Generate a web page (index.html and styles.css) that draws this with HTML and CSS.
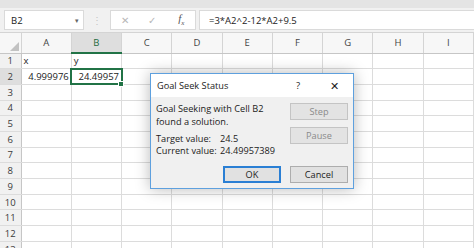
FILE: index.html
```html
<!DOCTYPE html>
<html lang="en-US">
  <head>
    <meta charset="UTF-8" />
    <title>Goal Seek Status</title>
    <link rel="stylesheet" href="styles.css">
  </head>
  <body>
    <div id="ribbon-edge"></div>
    <div id="formula-row">
      <div class="name-box">
        <span>B2</span>
        <span class="drop">&#9662;</span>
      </div>
      <div class="grip">&#8942;</div>
      <div class="fx-buttons">
        <span class="fx-cancel">&#10005;</span>
        <span class="fx-enter">&#10003;</span>
        <span class="fx-label">f<sub>x</sub></span>
      </div>
      <div class="formula-box">=3*A2^2-12*A2+9.5</div>
    </div>

    <table id="sheet">
      <colgroup>
        <col class="head-col">
        <col span="9">
      </colgroup>
      <thead>
        <tr>
          <th class="corner"><div class="corner-tri"></div></th>
          <th>A</th><th class="active">B</th><th>C</th><th>D</th><th>E</th><th>F</th><th>G</th><th>H</th><th>I</th>
        </tr>
      </thead>
      <tbody>
        <tr><th>1</th><td>x</td><td>y</td><td></td><td></td><td></td><td></td><td></td><td></td><td></td></tr>
        <tr><th class="active-row">2</th><td class="num">4.999976</td><td class="num selected">24.49957<div class="handle"></div></td><td></td><td></td><td></td><td></td><td></td><td></td><td></td></tr>
        <tr><th>3</th><td></td><td></td><td></td><td></td><td></td><td></td><td></td><td></td><td></td></tr>
        <tr><th>4</th><td></td><td></td><td></td><td></td><td></td><td></td><td></td><td></td><td></td></tr>
        <tr><th>5</th><td></td><td></td><td></td><td></td><td></td><td></td><td></td><td></td><td></td></tr>
        <tr><th>6</th><td></td><td></td><td></td><td></td><td></td><td></td><td></td><td></td><td></td></tr>
        <tr><th>7</th><td></td><td></td><td></td><td></td><td></td><td></td><td></td><td></td><td></td></tr>
        <tr><th>8</th><td></td><td></td><td></td><td></td><td></td><td></td><td></td><td></td><td></td></tr>
        <tr><th>9</th><td></td><td></td><td></td><td></td><td></td><td></td><td></td><td></td><td></td></tr>
        <tr><th>10</th><td></td><td></td><td></td><td></td><td></td><td></td><td></td><td></td><td></td></tr>
        <tr><th>11</th><td></td><td></td><td></td><td></td><td></td><td></td><td></td><td></td><td></td></tr>
        <tr><th>12</th><td></td><td></td><td></td><td></td><td></td><td></td><td></td><td></td><td></td></tr>
        <tr><th>13</th><td></td><td></td><td></td><td></td><td></td><td></td><td></td><td></td><td></td></tr>
      </tbody>
    </table>

    <!-- Goal Seek dialog floats over the grid -->
    <div id="goal-seek">
      <div class="title-bar">
        <span class="title">Goal Seek Status</span>
        <span class="help">?</span>
        <span class="close">&#10005;</span>
      </div>
      <div class="dialog-body">
        <div class="dialog-main">
          <div class="status-text">
            <p>Goal Seeking with Cell B2<br>found a solution.</p>
            <div class="value-row"><span class="value-label">Target value:</span><span>24.5</span></div>
            <div class="value-row"><span class="value-label">Current value:</span><span>24.49957389</span></div>
          </div>
          <div class="side-buttons">
            <button disabled>Step</button>
            <button disabled>Pause</button>
          </div>
        </div>
        <div class="dialog-footer">
          <button class="default">OK</button>
          <button>Cancel</button>
        </div>
      </div>
    </div>
  </body>
</html>
```

FILE: styles.css
```css
body {
  margin: 0;
  width: 474px;
  height: 248px;
  overflow: hidden;
  position: relative;
  background-color: #fff;
  font-family: "Open Sans", "Liberation Sans", sans-serif;
  color: #222;
}

#ribbon-edge {
  height: 8px;
  background-color: #e4e4e4;
}

#formula-row {
  display: flex;
  align-items: center;
  height: 24px;
  padding-left: 4px;
  background-color: #f1f1f1;
}

.name-box,
.fx-buttons,
.formula-box {
  height: 20px;
  box-sizing: border-box;
  background-color: #fff;
  border: 1px solid #dadada;
  display: flex;
  align-items: center;
  font-size: 9.5px;
}

.name-box {
  width: 80px;
  padding: 0 4px 0 6px;
  justify-content: space-between;
}

.name-box .drop {
  color: #666;
  font-size: 7px;
}

.grip {
  width: 26px;
  text-align: center;
  color: #c4c4c4;
  font-size: 10px;
}

.fx-buttons {
  width: 86px;
  color: #b7b7b7;
}

.fx-buttons span {
  width: 28px;
  text-align: center;
}

.fx-buttons .fx-cancel,
.fx-buttons .fx-enter {
  font-size: 10px;
}

.fx-label {
  margin-left: 2px;
  color: #555;
  font-family: "Liberation Serif", serif;
  font-style: italic;
  font-size: 11px;
}

.fx-label sub {
  font-size: 7px;
}

.formula-box {
  flex: 1;
  margin-left: 3px;
  padding-left: 9px;
  border-right: none;
}

/* Worksheet grid */
#sheet {
  width: 474px;
  table-layout: fixed;
  border-collapse: collapse;
  font-size: 9.5px;
}

#sheet .head-col {
  width: 21px;
}

#sheet thead th {
  height: 19px;
  padding: 0;
  font-weight: normal;
  color: #444;
  background-color: #f7f7f7;
  border-top: 1px solid #d4d4d4;
  border-right: 1px solid #d4d4d4;
  border-bottom: 1px solid #c6c6c6;
}

#sheet thead th.active {
  background-color: #dedede;
  color: #1e6b3f;
  border-bottom: 2px solid #217346;
}

#sheet thead th.corner {
  position: relative;
}

.corner-tri {
  position: absolute;
  right: 2px;
  bottom: 2px;
  width: 0;
  height: 0;
  border-left: 9px solid transparent;
  border-bottom: 9px solid #c2c2c2;
}

#sheet tbody tr {
  height: 15.7px;
}

#sheet tbody th {
  padding: 0;
  font-weight: normal;
  color: #3a3a3a;
  background-color: #f1f1f1;
  border-right: 1px solid #c6c6c6;
  border-bottom: 1px solid #dcdcdc;
}

#sheet tbody th.active-row {
  background-color: #dedede;
}

#sheet td {
  padding: 0 2px;
  border-right: 1px solid #dcdcdc;
  border-bottom: 1px solid #dcdcdc;
  white-space: nowrap;
  line-height: 12px;
}

#sheet td.num {
  text-align: right;
}

#sheet td.selected {
  position: relative;
  outline: 2px solid #217346;
  outline-offset: -1px;
}

.handle {
  position: absolute;
  right: -3px;
  bottom: -3px;
  width: 4px;
  height: 4px;
  background-color: #217346;
  border: 1px solid #fff;
}

/* Dialog */
#goal-seek {
  position: absolute;
  left: 150px;
  top: 73px;
  width: 204px;
  height: 116px;
  box-sizing: border-box;
  border: 1px solid #5ea0de;
  background-color: #f0f0f0;
  box-shadow: 0 0 14px rgba(0, 0, 0, 0.28);
  font-size: 9.2px;
  color: #1b1b1b;
}

.title-bar {
  display: flex;
  align-items: center;
  height: 23px;
  padding: 0 14px 0 6px;
  background-color: #fff;
}

.title-bar .title {
  flex: 1;
}

.title-bar .help {
  margin-right: 30px;
  font-size: 9.5px;
}

.title-bar .close {
  font-size: 11px;
}

.dialog-body {
  padding: 6px 5px 0 5px;
}

.dialog-main {
  display: flex;
  justify-content: space-between;
}

.status-text p {
  margin: 0 0 5px;
  line-height: 12.7px;
}

.value-row {
  display: flex;
  line-height: 12px;
}

.value-label {
  flex: none;
  width: 64px;
}

.side-buttons {
  display: flex;
  flex-direction: column;
  gap: 7px;
}

button {
  width: 58px;
  height: 17px;
  padding: 0;
  font-family: "Open Sans", "Liberation Sans", sans-serif;
  font-size: 9.2px;
  color: #1b1b1b;
  background-color: #e1e1e1;
  border: 1px solid #adadad;
}

button:disabled {
  color: #8a8a8a;
  background-color: #e3e3e3;
  border-color: #c4c4c4;
}

button.default {
  border: 2px solid #2a7fd4;
}

.dialog-footer {
  display: flex;
  justify-content: flex-end;
  gap: 9px;
  margin-top: 9px;
}
```
